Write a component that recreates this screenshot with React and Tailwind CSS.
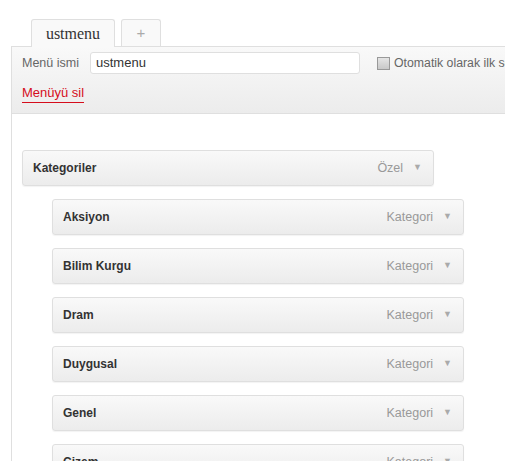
const items = ['Aksiyon', 'Bilim Kurgu', 'Dram', 'Duygusal', 'Genel', 'Çizem']

function MenuItem({ title, type, indent }) {
  return (
    <div
      className={`flex h-[36px] w-[412px] shrink-0 items-center justify-between rounded-[3px] border border-[#dfdfdf] bg-gradient-to-b from-[#f9f9f9] to-[#ececec] pl-[10px] pr-[11px] shadow-[0_1px_1px_rgba(0,0,0,0.05)] ${indent ? 'ml-[40px]' : 'ml-[10px]'}`}
    >
      <span className="text-[12px] font-bold text-[#333]">{title}</span>
      <span className="flex items-center gap-[10px] text-[12.5px] text-[#999]">
        {type}
        <span className="text-[9px] text-[#aaa]">▼</span>
      </span>
    </div>
  )
}

export default function App() {
  return (
    <div className="h-[461px] w-[505px] overflow-hidden bg-white font-['Liberation_Sans',Arial,sans-serif]">
      <div className="flex items-end gap-[6px] pl-[31px] pt-[19px]">
        <div className="-mb-px flex h-[28px] w-[84px] items-center justify-center rounded-t-[3px] border border-b-0 border-[#dfdfdf] bg-[#f9f9f9] font-['Liberation_Serif',serif] text-[16px] text-[#333]">
          ustmenu
        </div>
        <div className="flex h-[27px] w-[40px] items-center justify-center rounded-t-[3px] border border-b-0 border-[#dfdfdf] bg-[#f9f9f9] text-[15px] text-[#aaa]">
          +
        </div>
      </div>
      <div className="ml-[11px] border-l border-[#dfdfdf]">
        <div className="h-[68px] border-b border-t border-[#dfdfdf] bg-gradient-to-b from-[#f9f9f9] to-[#ececec] pl-[10px]">
          <div className="flex items-center whitespace-nowrap pt-[5px]">
            <span className="w-[68px] shrink-0 text-[12.5px] text-[#666]">Menü ismi</span>
            <div className="flex h-[22px] w-[270px] shrink-0 items-center rounded-[3px] border border-[#dfdfdf] bg-white pl-[5px] text-[13px] text-[#333]">
              ustmenu
            </div>
            <span className="ml-[17px] h-[13px] w-[13px] shrink-0 border border-[#999] bg-gradient-to-b from-[#e5e5e5] to-[#c8c8c8]" />
            <span className="ml-[4px] text-[12.3px] text-[#666]">Otomatik olarak ilk seviye sayfaları ekle</span>
          </div>
          <div className="pt-[6px]">
            <span className="border-b border-[#d50d1c] pb-[2px] text-[13px] text-[#d50d1c]">Menüyü sil</span>
          </div>
        </div>
        <div className="flex flex-col gap-[13px] pt-[36px]">
          <MenuItem title="Kategoriler" type="Özel" />
          {items.map((t) => (
            <MenuItem key={t} title={t} type="Kategori" indent />
          ))}
        </div>
      </div>
    </div>
  )
}
